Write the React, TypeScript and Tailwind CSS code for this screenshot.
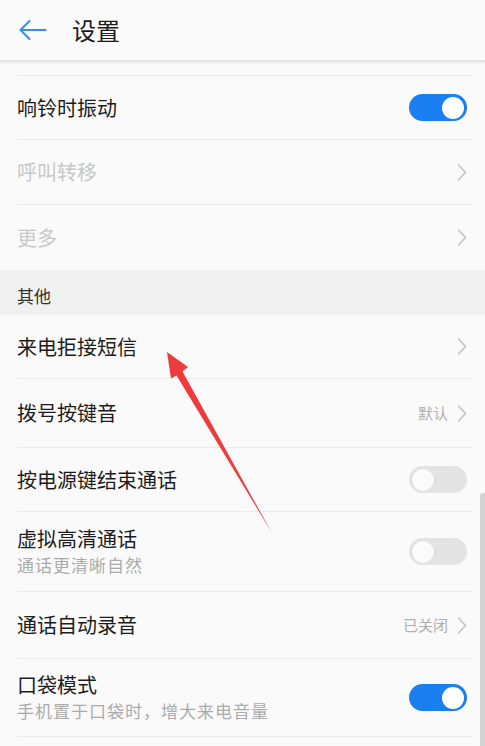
import React from "react";

type Row = {
  title: string;
  subtitle?: string;
  value?: string;
  kind: "chevron" | "on" | "off";
  disabled?: boolean;
  h: string;
  noBorder?: boolean;
};

const Chevron = () => (
  <svg width="10" height="17" viewBox="0 0 10 17" fill="none" className="shrink-0">
    <path d="M1.5 1 L8.5 8.5 L1.5 16" stroke="#c4c4c4" strokeWidth="1.6" strokeLinecap="round" strokeLinejoin="round" />
  </svg>
);

const Toggle = ({ on }: { on: boolean }) =>
  on ? (
    <div className="w-[58px] h-[27px] rounded-full bg-[#1a7ff0] flex items-center justify-end pr-[3px] shrink-0">
      <div className="w-[22px] h-[22px] rounded-full bg-white" />
    </div>
  ) : (
    <div className="w-[58px] h-[27px] rounded-full bg-[#e3e3e3] flex items-center pl-[3px] shrink-0">
      <div className="w-[22px] h-[22px] rounded-full bg-[#fbfbfb] shadow-[0_0_1px_rgba(0,0,0,0.15)]" />
    </div>
  );

const SettingRow = ({ row }: { row: Row }) => (
  <div
    className={`ml-[17px] mr-[13px] pr-[5px] flex items-center ${row.h} ${
      row.noBorder ? "" : "border-b border-[#ebebeb]"
    }`}
  >
    <div className="flex-1 flex flex-col">
      <span
        className={`text-[20px] leading-[26px] ${row.disabled ? "text-[#c8c8c8]" : "text-[#1c1c1c]"}`}
      >
        {row.title}
      </span>
      {row.subtitle && (
        <span className="text-[17px] leading-[24px] tracking-[1px] text-[#ababab] mt-[1px]">
          {row.subtitle}
        </span>
      )}
    </div>
    {row.value && <span className="text-[15px] text-[#b0b0b0] mr-[9px]">{row.value}</span>}
    {row.kind === "chevron" ? <Chevron /> : <Toggle on={row.kind === "on"} />}
  </div>
);

const top: Row[] = [
  { title: "响铃时振动", kind: "on", h: "h-[64px]" },
  { title: "呼叫转移", kind: "chevron", disabled: true, h: "h-[65px]" },
  { title: "更多", kind: "chevron", disabled: true, h: "h-[65px]", noBorder: true },
];

const others: Row[] = [
  { title: "来电拒接短信", kind: "chevron", h: "h-[64px]" },
  { title: "拨号按键音", value: "默认", kind: "chevron", h: "h-[69px]" },
  { title: "按电源键结束通话", kind: "off", h: "h-[64px]" },
  { title: "虚拟高清通话", subtitle: "通话更清晰自然", kind: "off", h: "h-[80px]" },
  { title: "通话自动录音", value: "已关闭", kind: "chevron", h: "h-[67px]" },
  { title: "口袋模式", subtitle: "手机置于口袋时，增大来电音量", kind: "on", h: "h-[78px]" },
];

export default function App() {
  return (
    <div className="relative w-[485px] h-[746px] overflow-hidden bg-[#fafafa] font-['Noto_Sans_CJK_SC','Noto_Sans',sans-serif]">
      {/* header */}
      <div className="h-[62px] flex items-center pl-[19px] border-b-2 border-[#e4e4e4] shadow-[0_1px_2px_rgba(0,0,0,0.06)]">
        <svg width="28" height="20" viewBox="0 0 28 20" fill="none">
          <path d="M10.5 1 L1.5 10 L10.5 19 M1.5 10 H26.5" stroke="#2f8ff0" strokeWidth="2" strokeLinecap="round" strokeLinejoin="round" />
        </svg>
        <span className="ml-[25px] text-[24px] text-[#1c1c1c] leading-none">设置</span>
      </div>

      <div className="ml-[17px] mr-[13px] h-[14px] border-b border-[#ebebeb]" />

      {top.map((r) => (
        <SettingRow key={r.title} row={r} />
      ))}

      <div className="h-[45px] bg-[#f1f1f1] flex items-center pl-[17px] pt-[6px]">
        <span className="text-[17px] text-[#333]">其他</span>
      </div>

      {others.map((r) => (
        <SettingRow key={r.title} row={r} />
      ))}

      {/* scrollbar */}
      <div className="absolute right-0 top-[493px] w-[5px] h-[260px] rounded-tl-[3px] bg-[#d2d2d2]" />

      {/* red annotation arrow */}
      <svg className="absolute left-0 top-0 pointer-events-none" width="485" height="746" viewBox="0 0 485 746">
        <polygon
          points="167,352 188,367 182.5,371.5 272,533 176.5,375.5 171,378.5"
          fill="#ee3b3b"
        />
      </svg>
    </div>
  );
}
